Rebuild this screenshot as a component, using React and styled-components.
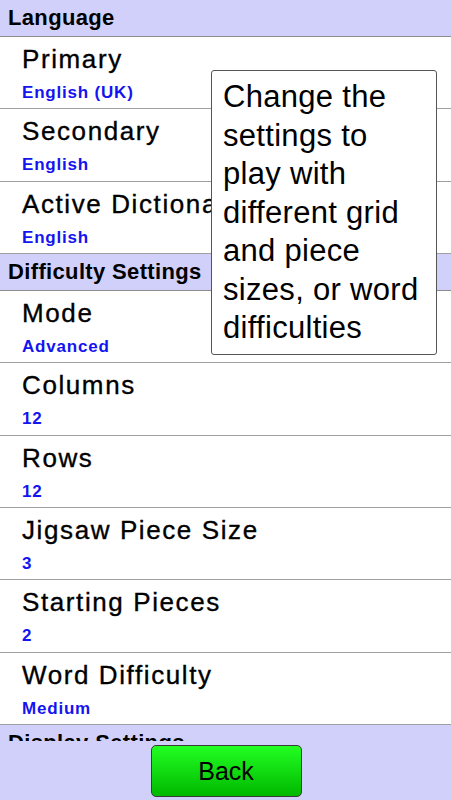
import React from "react";
import styled, { createGlobalStyle } from "styled-components";

const sections = [
  {
    title: "Language",
    items: [
      { label: "Primary", value: "English (UK)" },
      { label: "Secondary", value: "English" },
      { label: "Active Dictionary", value: "English" },
    ],
  },
  {
    title: "Difficulty Settings",
    items: [
      { label: "Mode", value: "Advanced" },
      { label: "Columns", value: "12" },
      { label: "Rows", value: "12" },
      { label: "Jigsaw Piece Size", value: "3" },
      { label: "Starting Pieces", value: "2" },
      { label: "Word Difficulty", value: "Medium" },
    ],
  },
  {
    title: "Display Settings",
    items: [{ label: "Theme", value: "Default" }],
  },
];

const hint = [
  "Change the",
  "settings to",
  "play with",
  "different grid",
  "and piece",
  "sizes, or word",
  "difficulties",
];

function App() {
  return (
    <>
      <GlobalStyle />
      <Screen>
        <List>
          {sections.map((section) => (
            <section key={section.title}>
              <Header>{section.title}</Header>
              {section.items.map((item) => (
                <Row key={item.label}>
                  <Label>{item.label}</Label>
                  <Value>{item.value}</Value>
                </Row>
              ))}
            </section>
          ))}
          <Tip>
            {hint.map((line) => (
              <div key={line}>{line}</div>
            ))}
          </Tip>
        </List>
        <Footer>
          <BackButton>Back</BackButton>
        </Footer>
      </Screen>
    </>
  );
}

export default App;

const GlobalStyle = createGlobalStyle`
  html, body {
    margin: 0;
    padding: 0;
    background: #fff;
  }
  body {
    font-family: "Liberation Sans", Arial, sans-serif;
  }
`;

const Screen = styled.div`
  width: 451px;
  height: 800px;
  display: flex;
  flex-direction: column;
  overflow: hidden;
`;

const List = styled.div`
  position: relative;
  flex: 1;
  overflow: hidden;
  background: #fff;
`;

const Header = styled.div`
  height: 37px;
  box-sizing: border-box;
  background: #d0d0fb;
  border-bottom: 1px solid #8c8c8c;
  padding-left: 8px;
  font-size: 22px;
  font-weight: bold;
  letter-spacing: 0.35px;
  line-height: 36px;
  color: #000;
`;

const Row = styled.div`
  height: 72.33px;
  box-sizing: border-box;
  border-bottom: 1px solid #a0a0a0;
  padding: 8px 0 0 22px;
  display: flex;
  flex-direction: column;
`;

const Label = styled.div`
  font-size: 26px;
  line-height: 29px;
  letter-spacing: 1.6px;
  color: #000;
  -webkit-text-stroke: 0.35px #000;
  white-space: nowrap;
`;

const Value = styled.div`
  margin-top: 9px;
  font-size: 17px;
  line-height: 20px;
  font-weight: bold;
  letter-spacing: 0.8px;
  color: #1414f0;
`;

const Tip = styled.div`
  position: absolute;
  left: 211px;
  top: 70px;
  width: 226px;
  box-sizing: border-box;
  padding: 7px 10px 6px 11px;
  background: #fff;
  border: 1px solid #555;
  border-radius: 3px;
  font-size: 31px;
  line-height: 38.5px;
  letter-spacing: 0.3px;
  color: #000;
`;

const Footer = styled.div`
  height: 59px;
  flex-shrink: 0;
  background: #d0d0fb;
  display: flex;
  justify-content: center;
  padding-top: 4px;
  box-sizing: border-box;
`;

const BackButton = styled.button`
  width: 151px;
  height: 52px;
  margin-left: 1px;
  border: 1px solid #3a3a3a;
  border-radius: 5px;
  background: linear-gradient(#22ff22, #00b800);
  font-family: "Liberation Sans", Arial, sans-serif;
  font-size: 25px;
  color: #000;
  padding: 0;
  cursor: pointer;
`;
